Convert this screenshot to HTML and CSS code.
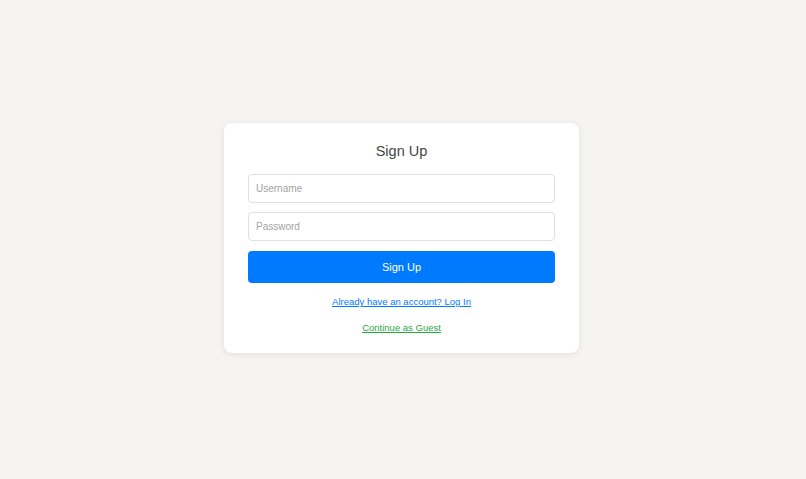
FILE: index.html
```html
<!DOCTYPE html>
<html lang="en">
<head>
<meta charset="utf-8">
<title>Sign Up</title>
<link rel="stylesheet" href="styles.css">
</head>
<body>
<main class="page">
  <form class="card">
    <h1 class="title">Sign Up</h1>
    <input class="field field-user" type="text" placeholder="Username">
    <input class="field field-pass" type="password" placeholder="Password">
    <button class="submit" type="button">Sign Up</button>
    <a class="link link-login" href="#">Already have an account? Log In</a>
    <a class="link link-guest" href="#">Continue as Guest</a>
  </form>
</main>
</body>
</html>
```
FILE: styles.css
```css
* { box-sizing: border-box; }
html, body { margin: 0; padding: 0; }
body {
  background: #f6f4f1;
  font-family: "Liberation Sans", Arial, sans-serif;
}
.page {
  min-height: 100vh;
  display: flex;
  align-items: center;
  justify-content: center;
  padding: 0 3px 3px 0;
}
.card {
  width: 355px;
  background: #ffffff;
  border-radius: 8px;
  box-shadow: 0 1px 6px rgba(0, 0, 0, 0.09);
  padding: 18px 24px 18px;
  display: flex;
  flex-direction: column;
  align-items: stretch;
}
.title {
  margin: 0 0 13px;
  font-size: 14.5px;
  line-height: 20px;
  font-weight: normal;
  color: #444444;
  text-align: center;
}
.field {
  height: 29px;
  border: 1px solid #e0e0e0;
  border-radius: 4px;
  padding: 0 7px;
  font-family: inherit;
  font-size: 10px;
  color: #333;
  outline: none;
  background: #fff;
}
.field::placeholder { color: #a3a3a3; }
.field-user { margin-bottom: 9px; }
.field-pass { margin-bottom: 10px; }
.submit {
  height: 32px;
  border: none;
  border-radius: 4px;
  background: #007bff;
  color: #ffffff;
  font-family: inherit;
  font-size: 11px;
  margin-bottom: 12px;
  padding: 0;
}
.link {
  display: block;
  text-align: center;
  font-size: 9.5px;
  line-height: 14px;
  text-decoration: underline;
}
.link-login { color: #007bff; margin: 0 auto 12px; }
.link-guest { color: #28a745; margin: 0 auto; }
```
